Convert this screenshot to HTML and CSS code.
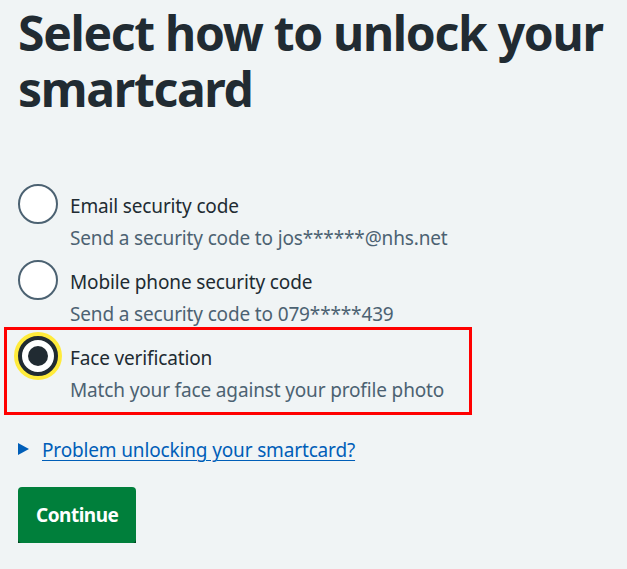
FILE: index.html
```html
<!DOCTYPE html>
<html lang="en">
<head>
<meta charset="utf-8">
<title>Select how to unlock your smartcard</title>
<link rel="stylesheet" href="styles.css">
</head>
<body>
<main class="page">
  <form class="form">
    <fieldset class="fieldset">
      <legend class="legend"><h1 class="heading">Select how to unlock your smartcard</h1></legend>
      <div class="radios">
        <div class="radio-item">
          <input class="radio-input" type="radio" name="method" id="m1" value="email">
          <label class="radio-label" for="m1">Email security code</label>
          <div class="radio-hint">Send a security code to jos******@nhs.net</div>
        </div>
        <div class="radio-item">
          <input class="radio-input" type="radio" name="method" id="m2" value="mobile">
          <label class="radio-label" for="m2">Mobile phone security code</label>
          <div class="radio-hint">Send a security code to 079*****439</div>
        </div>
        <div class="radio-item radio-item--marked">
          <input class="radio-input is-focused" type="radio" name="method" id="m3" value="face" checked>
          <label class="radio-label" for="m3">Face verification</label>
          <div class="radio-hint">Match your face against your profile photo</div>
          <span class="highlight-box" aria-hidden="true"></span>
        </div>
      </div>
    </fieldset>
    <details class="details">
      <summary class="details-summary"><span class="details-text">Problem unlocking your smartcard?</span></summary>
    </details>
    <button class="button" type="submit">Continue</button>
  </form>
</main>
</body>
</html>
```
FILE: styles.css
```css
html, body {
  margin: 0;
  padding: 0;
  background: #f0f4f5;
}
body {
  font-family: "Noto Sans", "Lato", sans-serif;
  color: #212b32;
  letter-spacing: -0.15px;
}
.page {
  padding: 5px 18px 0 18px;
}
.form { margin: 0; }
.fieldset {
  border: 0;
  margin: 0;
  padding: 0;
  min-width: 0;
}
.legend {
  padding: 0;
  display: block;
  width: 100%;
}
.heading {
  margin: 0 0 67px 0;
  font-size: 48px;
  line-height: 56px;
  font-weight: 700;
  letter-spacing: -1.3px;
  color: #212b32;
}
.radios {
  display: flex;
  flex-direction: column;
  gap: 8px;
}
.radio-item {
  position: relative;
  padding-left: 40px;
  min-height: 40px;
}
.radio-input {
  position: absolute;
  left: 0;
  top: 0;
  width: 40px;
  height: 40px;
  margin: 0;
  -webkit-appearance: none;
  appearance: none;
  border: 2px solid #4c6272;
  border-radius: 50%;
  background: #ffffff;
  box-sizing: border-box;
}
.radio-input:checked {
  border: 4px solid #212b32;
}
.radio-input:checked::after {
  content: "";
  position: absolute;
  left: 6px;
  top: 6px;
  width: 20px;
  height: 20px;
  border-radius: 50%;
  background: #212b32;
}
.radio-input.is-focused {
  box-shadow: 0 0 0 4px #ffeb3b;
}
.radio-label {
  display: block;
  padding: 8px 12px 4px 12px;
  font-size: 19px;
  line-height: 28px;
  color: #212b32;
}
.radio-hint {
  padding-left: 12px;
  font-size: 19px;
  line-height: 28px;
  color: #4c6272;
}
.highlight-box {
  position: absolute;
  left: -14px;
  top: -9px;
  width: 462px;
  height: 82px;
  border: 3px solid #ff0000;
  pointer-events: none;
}
.details {
  margin: 32px 0 23px 0;
}
.details-summary {
  list-style: none;
  position: relative;
  display: inline-block;
  padding-left: 24px;
  font-size: 19px;
  line-height: 28px;
  cursor: pointer;
}
.details-summary::-webkit-details-marker { display: none; }
.details-summary::before {
  content: "";
  position: absolute;
  left: 0;
  top: 7px;
  width: 0;
  height: 0;
  border-style: solid;
  border-width: 6.5px 0 6.5px 11px;
  border-color: transparent transparent transparent #005eb8;
}
.details-text {
  color: #005eb8;
  text-decoration: underline;
  text-underline-offset: 3px;
  text-decoration-thickness: 1px;
}
.button {
  display: inline-block;
  font-family: inherit;
  font-size: 19px;
  line-height: 28px;
  font-weight: 700;
  letter-spacing: -0.5px;
  color: #ffffff;
  background: #007f3b;
  border: 2px solid transparent;
  border-radius: 4px;
  padding: 12px 16px;
  box-shadow: 0 4px 0 #00401e;
  cursor: pointer;
}
```
